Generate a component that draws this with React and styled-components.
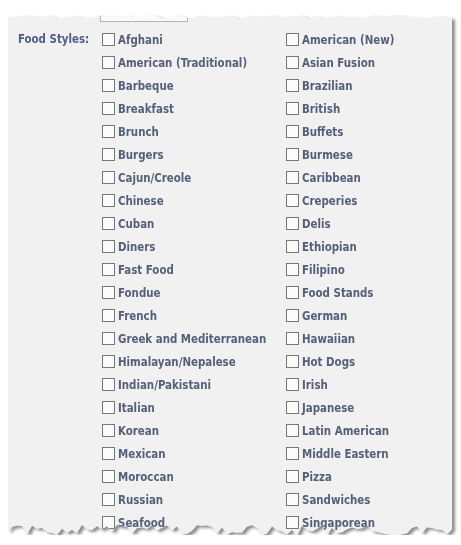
import React from 'react'
import styled, { createGlobalStyle } from 'styled-components'

const GlobalStyle = createGlobalStyle`
  body {
    margin: 0;
    background: #fff;
  }
`

const left = [
  'Afghani', 'American (Traditional)', 'Barbeque', 'Breakfast', 'Brunch', 'Burgers',
  'Cajun/Creole', 'Chinese', 'Cuban', 'Diners', 'Fast Food', 'Fondue', 'French',
  'Greek and Mediterranean', 'Himalayan/Nepalese', 'Indian/Pakistani', 'Italian',
  'Korean', 'Mexican', 'Moroccan', 'Russian', 'Seafood',
]
const right = [
  'American (New)', 'Asian Fusion', 'Brazilian', 'British', 'Buffets', 'Burmese',
  'Caribbean', 'Creperies', 'Delis', 'Ethiopian', 'Filipino', 'Food Stands', 'German',
  'Hawaiian', 'Hot Dogs', 'Irish', 'Japanese', 'Latin American', 'Middle Eastern',
  'Pizza', 'Sandwiches', 'Singaporean',
]
const styles = left.flatMap((name, i) => [name, right[i]])

// torn paper outline, built once from a fixed pseudo random sequence
function tornEdge(w, h) {
  let seed = 7
  const rnd = () => {
    seed = (seed * 9301 + 49297) % 233280
    return seed / 233280
  }
  const pts = []
  for (let x = 0; x <= w; x += 7) pts.push(`${x}px ${(5 + rnd() * 4).toFixed(1)}px`)
  pts.push(`${w}px 8px`)
  for (let x = w; x >= 0; x -= 5) pts.push(`${x}px ${(h - 15 + rnd() * 11).toFixed(1)}px`)
  pts.push(`0px ${h - 8}px`)
  return `polygon(${pts.join(',')})`
}

const W = 444
const H = 530

const Page = styled.div`
  padding: 10px 0 0 8px;
  height: 535px;
  box-sizing: border-box;
`

const Shadow = styled.div`
  width: ${W}px;
  filter: drop-shadow(3px 2px 1.5px rgba(0, 0, 0, 0.45));
`

const Paper = styled.div`
  height: ${H}px;
  background: #f1f1f1;
  overflow: hidden;
  clip-path: ${(p) => p.$clip};
`

const CutField = styled.div`
  margin-left: 92px;
  width: 86px;
  height: 11px;
  background: #fafafa;
  border: 1px solid #aab2cf;
  border-top: none;
`

const Field = styled.div`
  display: flex;
  margin-top: 6px;
  padding-left: 10px;
  font-family: "DejaVu Sans Condensed", "DejaVu Sans", sans-serif;
  font-stretch: condensed;
  font-weight: bold;
  font-size: 11.4px;
  color: #555f79;
`

const Label = styled.div`
  width: 84px;
  line-height: 23px;
  color: #4f5e88;
`

const Options = styled.div`
  display: grid;
  grid-template-columns: 184px 1fr;
  grid-auto-rows: 23px;
`

const Option = styled.label`
  display: flex;
  align-items: center;
  gap: 3px;
`

const Box = styled.span`
  width: 11px;
  height: 11px;
  border: 1px solid #767676;
  background: #fbfbfb;
  flex: none;
`

function App() {
  return (
    <Page>
      <GlobalStyle />
      <Shadow>
        <Paper $clip={tornEdge(W, H)}>
          <CutField />
          <Field>
            <Label>Food Styles:</Label>
            <Options>
              {styles.map((name) => (
                <Option key={name}>
                  <Box />
                  {name}
                </Option>
              ))}
            </Options>
          </Field>
        </Paper>
      </Shadow>
    </Page>
  )
}

export default App
